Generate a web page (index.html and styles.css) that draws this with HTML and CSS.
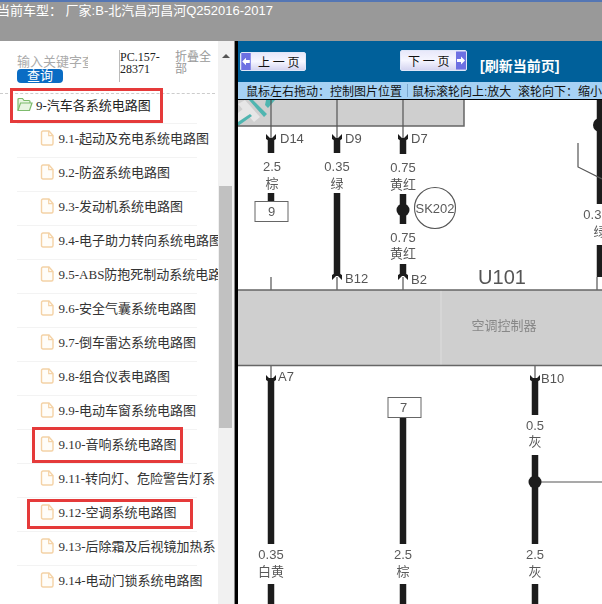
FILE: index.html
```html
<!DOCTYPE html>
<html>
<head>
    <meta charset="UTF-8">
    <title>电路图</title>
    <link rel="stylesheet" href="styles.css">
</head>
<body>
<svg class="defs" width="0" height="0">
    <symbol id="file" viewBox="0 0 14 16">
        <path d="M1.5 2.5q0-1.5 1.500-1.500h6l4 4.500v8q0 1.500-1.500 1.500h-8.500q-1.500 0-1.500-1.500z" fill="#fffdf9" stroke="#f4d2a6" stroke-width="1.400"/>
        <path d="M8.700 1v4.700h4.300" fill="none" stroke="#f4d2a6" stroke-width="1.200"/>
    </symbol>
</svg>
<div class="top">
    <div class="car">当前车型： 厂家:B-北汽昌河昌河Q252016-2017</div>
</div>
<div class="main">
    <div class="side">
        <div class="tools">
            <div class="search">
                <div class="keyword">输入关键字查</div>
                <div class="query">查询</div>
            </div>
            <div class="pc">PC.157-28371</div>
            <div class="fold">折叠全部</div>
        </div>
        <div class="root">
            <svg class="folder" viewBox="0 0 16 15">
                <path d="M1 13V2.500q0-1 1-1h3.500l1.500 2h5q1 0 1 1V6" fill="#e8f5e2" stroke="#7dbb6c" stroke-width="1.200"/>
                <path d="M1 13.500l2.500-7.500h11.500l-2.500 7.500z" fill="#e8f5e2" stroke="#7dbb6c" stroke-width="1.200"/>
            </svg>
            <span>9-汽车各系统电路图</span>
        </div>
        <ul class="list">
            <li><svg class="file"><use href="#file"/></svg><span>9.1-起动及充电系统电路图</span></li>
            <li><svg class="file"><use href="#file"/></svg><span>9.2-防盗系统电路图</span></li>
            <li><svg class="file"><use href="#file"/></svg><span>9.3-发动机系统电路图</span></li>
            <li><svg class="file"><use href="#file"/></svg><span>9.4-电子助力转向系统电路图</span></li>
            <li><svg class="file"><use href="#file"/></svg><span>9.5-ABS防抱死制动系统电路图</span></li>
            <li><svg class="file"><use href="#file"/></svg><span>9.6-安全气囊系统电路图</span></li>
            <li><svg class="file"><use href="#file"/></svg><span>9.7-倒车雷达系统电路图</span></li>
            <li><svg class="file"><use href="#file"/></svg><span>9.8-组合仪表电路图</span></li>
            <li><svg class="file"><use href="#file"/></svg><span>9.9-电动车窗系统电路图</span></li>
            <li><svg class="file"><use href="#file"/></svg><span>9.10-音响系统电路图</span></li>
            <li><svg class="file"><use href="#file"/></svg><span>9.11-转向灯、危险警告灯系</span></li>
            <li><svg class="file"><use href="#file"/></svg><span>9.12-空调系统电路图</span></li>
            <li><svg class="file"><use href="#file"/></svg><span>9.13-后除霜及后视镜加热系</span></li>
            <li><svg class="file"><use href="#file"/></svg><span>9.14-电动门锁系统电路图</span></li>
        </ul>
        <div class="mark mark-root"></div>
        <div class="mark mark-audio"></div>
        <div class="mark mark-air"></div>
    </div>
    <div class="bar">
        <div class="bar-up"></div>
        <div class="bar-thumb"></div>
    </div>
    <div class="view">
        <div class="nav">
            <div class="btn btn-prev">
                <svg class="arrow" viewBox="0 0 10 18"><rect width="10" height="18" fill="#6d70e2"/><path d="M1 9l4-4v2.500h4v3H5V13z" fill="#fff"/></svg>
                <span>上 一 页</span>
            </div>
            <div class="btn btn-next">
                <span>下 一 页</span>
                <svg class="arrow" viewBox="0 0 10 18"><rect width="10" height="18" fill="#6d70e2"/><path d="M9 9L5 5v2.500H1v3h4V13z" fill="#fff"/></svg>
            </div>
            <div class="refresh">[刷新当前页]</div>
        </div>
        <div class="tip">鼠标左右拖动：控制图片位置<i class="sep"></i>鼠标滚轮向上:放大<i class="gap"></i>滚轮向下：缩小</div>
        <svg class="chart" viewBox="238 100 364 504">
            <!-- 上面的灰块 -->
            <rect class="block" x="238" y="100" width="226" height="26"/>
            <path class="pale" d="M238 104l7-4 15 17-6 5zM238 113l6-5 6 6-12 8z"/>
            <path class="teal" d="M238 122l12-8 2 2-14 10zM253 100l14 14-3 3-15-17zM266 100l9 0-7 8-3-3z"/>
            <path class="edge" d="M238 126h226V100"/>
            <path class="thin" d="M271 100v38M337 100v38M403 100v38M271 277v13M337 277v13M403 277v13M597 277v13"/>

            <!-- 导线 -->
            <path class="wire" d="M271 138v15M271 193v8M337 138v15M337 193v83M403 138v16M403 194v30M403 264v12M535 378v37M535 455v89M535 584v20M271 378v166M271 584v20M403 417v127M403 584v20M600 100v104M600 245v32"/>
            <path class="thin" d="M271 366v12M535 366v12M535 482h67M578 143v24l24 12"/>
            <path class="head" d="M266 134l5 5 5-5v5l-5 3-5-3zM332 134l5 5 5-5v5l-5 3-5-3zM398 134l5 5 5-5v5l-5 3-5-3zM266 375l5 5 5-5v5l-5 3-5-3zM530 375l5 5 5-5v5l-5 3-5-3zM332 280l5-5 5 5v-5l-5-3-5 3zM398 280l5-5 5 5v-5l-5-3-5 3z"/>
            <circle class="dot" cx="403" cy="210" r="6.500"/>
            <circle class="dot" cx="535" cy="482" r="6.500"/>
            <circle class="dot" cx="600" cy="125" r="7"/>
            <circle class="ring" cx="435" cy="208" r="20.500"/>
            <rect class="box" x="255" y="201.500" width="33" height="20"/>
            <rect class="box" x="388" y="397.500" width="33" height="20"/>

            <text class="pin" x="280" y="143">D14</text>
            <text class="pin" x="345" y="143">D9</text>
            <text class="pin" x="411" y="143">D7</text>
            <text class="pin" x="345" y="283">B12</text>
            <text class="pin" x="411" y="284">B2</text>
            <text class="pin" x="278" y="381">A7</text>
            <text class="pin" x="541" y="383">B10</text>

            <text class="num" x="272" y="171">2.5</text>
            <text class="num" x="272" y="188">棕</text>
            <text class="num" x="337" y="171">0.35</text>
            <text class="num" x="337" y="188">绿</text>
            <text class="num" x="403" y="172">0.75</text>
            <text class="num" x="403" y="189">黄红</text>
            <text class="num" x="403" y="242">0.75</text>
            <text class="num" x="403" y="258">黄红</text>
            <text class="num" x="596" y="219">0.35</text>
            <text class="num" x="600" y="236">绿</text>
            <text class="num" x="535" y="430">0.5</text>
            <text class="num" x="535" y="446">灰</text>
            <text class="num" x="271" y="559">0.35</text>
            <text class="num" x="271" y="576">白黄</text>
            <text class="num" x="403" y="559">2.5</text>
            <text class="num" x="403" y="576">棕</text>
            <text class="num" x="535" y="559">2.5</text>
            <text class="num" x="535" y="576">灰</text>
            <text class="num" x="271.500" y="216">9</text>
            <text class="num" x="403.500" y="412">7</text>
            <text class="num" x="435" y="213">SK202</text>
            <text class="name" x="502" y="284">U101</text>

            <!-- 中间的控制器 -->
            <rect class="block" x="238" y="290" width="364" height="75"/>
            <path class="seam" d="M441 290v75"/>
            <path class="edge" d="M238 290h364M238 365.500h364"/>
            <text class="unit" x="504" y="330">空调控制器</text>
        </svg>
    </div>
</div>
</body>
</html>
```

FILE: styles.css
```css
* {
    margin: 0;
    padding: 0;
    list-style: none;
    box-sizing: border-box;
}
html, body {
    height: 100%;
    overflow: hidden;
}
body {
    display: flex;
    flex-direction: column;
    background: #fff;
    font-family: "Liberation Sans", "Noto Sans CJK SC", sans-serif;
}
.defs {
    position: absolute;
}
.top {
    flex: none;
    height: 41px;
    background: #999;
    border-top: 2px solid #5476b4;
    overflow: hidden;
}
.car {
    margin: 1px 0 0 -3px;
    color: #fff;
    font-size: 13px;
    line-height: 15px;
    white-space: nowrap;
}
.main {
    flex: 1;
    display: flex;
    min-height: 0;
}

/* 左边目录 */
.side {
    position: relative;
    flex: none;
    width: 218px;
    overflow: hidden;
    padding-left: 17px;
}
.tools {
    display: flex;
    height: 53px;
    padding-top: 9px;
    border-bottom: 1px dashed #ccc;
    margin-left: -17px;
    padding-left: 17px;
    margin-right: 3px;
}
.search {
    width: 102px;
    height: 32px;
    padding-top: 4px;
}
.keyword {
    width: 71px;
    height: 15px;
    overflow: hidden;
    color: #aaa;
    font-size: 13px;
    line-height: 15px;
    white-space: nowrap;
}
.query {
    width: 46px;
    height: 14px;
    border-radius: 4px;
    background: #0a6cc4;
    color: #fff;
    font-size: 13px;
    line-height: 14px;
    text-align: center;
}
.pc {
    width: 56px;
    height: 32px;
    border-left: 1px solid #bbb;
    padding-right: 6px;
    color: #222;
    font-family: "Liberation Serif", "Noto Sans CJK SC", serif;
    font-size: 12px;
    line-height: 12px;
    padding-top: 1px;
}
.fold {
    width: 38px;
    color: #999;
    font-size: 12px;
    line-height: 12px;
    padding-top: 1px;
}
.root {
    display: flex;
    align-items: center;
    height: 29px;
    padding-bottom: 9px;
    color: #222;
    font-family: "Liberation Serif", "Noto Sans CJK SC", serif;
    font-size: 13px;
    white-space: nowrap;
}
.folder {
    width: 16px;
    height: 15px;
    margin-right: 3px;
}
.list li {
    display: flex;
    align-items: center;
    height: 34px;
    width: 180px;
    border-top: 1px solid #f3f3f3;
    padding: 0 0 6px 23px;
    color: #333;
    font-family: "Liberation Serif", "Noto Sans CJK SC", serif;
    font-size: 13px;
    white-space: nowrap;
}
.list li span {
    margin-left: 4.500px;
}
.file {
    flex: none;
    width: 14px;
    height: 16px;
}
.mark {
    position: absolute;
    border: 3px solid #e53a3a;
}
.mark-root {
    left: 10px;
    top: 47px;
    width: 153px;
    height: 35px;
}
.mark-audio {
    left: 32px;
    top: 386px;
    width: 151px;
    height: 36px;
}
.mark-air {
    left: 27px;
    top: 458px;
    width: 166px;
    height: 30px;
}

/* 滚动条 */
.bar {
    flex: none;
    width: 17px;
    background: #f1f1f1;
    border-right: 1px solid #888;
    padding-top: 13px;
}
.bar-up {
    width: 0;
    margin: 0 auto;
    border: 4px solid transparent;
    border-top: 0;
    border-bottom: 4px solid #555;
}
.bar-thumb {
    width: 13px;
    height: 242px;
    margin: 128px 0 0 1px;
    background: #c1c1c1;
}

/* 右边图 */
.view {
    flex: 1;
    min-width: 0;
    display: flex;
    flex-direction: column;
    border-left: 3px solid #000;
}
.nav {
    flex: none;
    display: flex;
    align-items: flex-start;
    height: 41px;
    padding: 9px 0 0 2px;
    background: #00609a;
}
.btn {
    display: flex;
    height: 19px;
    align-items: center;
    border: 1px solid #dfe6f8;
    border-radius: 2px;
    background: linear-gradient(#e8e8fa, #f6f6ff 50%, #d4d4f0);
    color: #111;
    font-family: "Noto Sans CJK SC", sans-serif;
    font-size: 12px;
}
.btn-prev {
    width: 66px;
    margin-top: 2px;
}
.btn-prev span {
    margin-left: 7px;
}
.btn-next {
    width: 67px;
    height: 21px;
    margin-left: 94px;
    justify-content: space-between;
}
.btn-next span {
    margin-left: 7px;
}
.arrow {
    flex: none;
    width: 10px;
    height: 100%;
}
.refresh {
    margin: 8px 0 0 13px;
    color: #fff;
    font-size: 14px;
    font-weight: bold;
    line-height: 17px;
}
.tip {
    flex: none;
    display: flex;
    align-items: center;
    height: 18px;
    padding-left: 8px;
    border-bottom: 1px solid #000;
    background: #a6d2f4;
    color: #111;
    font-size: 12px;
    white-space: nowrap;
}
.sep {
    width: 1px;
    height: 13px;
    margin: 0 4px 0 5px;
    background: #7aa6cc;
}
.gap {
    width: 7px;
}
.chart {
    flex: 1;
    display: block;
    width: 364px;
    height: 504px;
    filter: blur(0.35px);
}
.block {
    fill: #cfcfcf;
}
.teal {
    fill: #4fb5b0;
}
.pale {
    fill: #e6e6e6;
}
.edge {
    fill: none;
    stroke: #666;
    stroke-width: 1.500;
}
.thin {
    fill: none;
    stroke: #555;
    stroke-width: 1.200;
}
.seam {
    stroke: #ddd;
    stroke-width: 1;
}
.wire {
    fill: none;
    stroke: #1c1c1c;
    stroke-width: 6.500;
}
.head {
    fill: #1c1c1c;
}
.dot {
    fill: #1c1c1c;
}
.ring {
    fill: none;
    stroke: #555;
    stroke-width: 1.100;
}
.box {
    fill: #fff;
    stroke: #666;
    stroke-width: 1;
}
.pin {
    fill: #555;
    font-size: 13px;
}
.num {
    fill: #5a5a5a;
    font-size: 13px;
    text-anchor: middle;
}
.name {
    fill: #555;
    font-size: 20px;
    text-anchor: middle;
}
.unit {
    fill: #888;
    font-size: 13px;
    text-anchor: middle;
}
```
